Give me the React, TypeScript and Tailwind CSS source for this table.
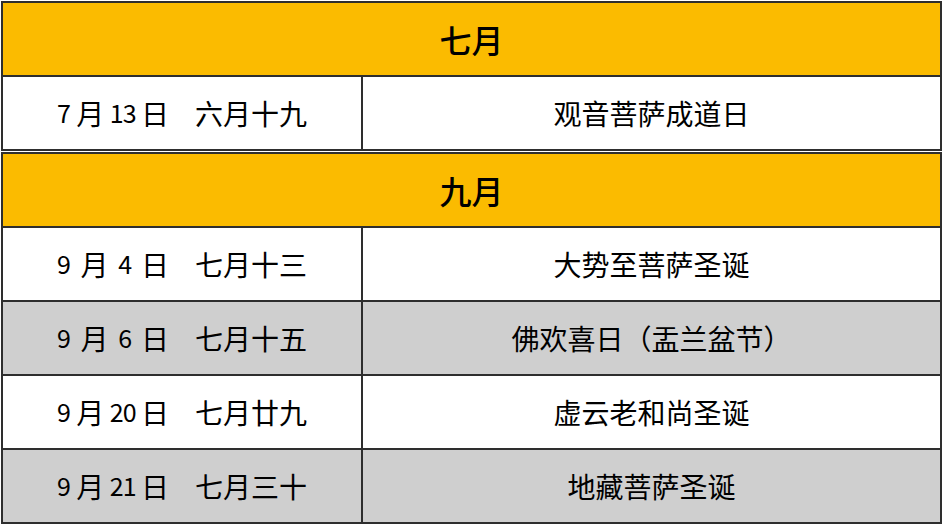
const font = {
  fontFamily: '"Noto Sans CJK SC", "Noto Sans", sans-serif',
};

type Row = { m: string; d: string; lunar: string; name: string; grey?: boolean };

const july: Row[] = [{ m: "7", d: "13", lunar: "六月十九", name: "观音菩萨成道日" }];

const september: Row[] = [
  { m: "9", d: "4", lunar: "七月十三", name: "大势至菩萨圣诞" },
  { m: "9", d: "6", lunar: "七月十五", name: "佛欢喜日（盂兰盆节）", grey: true },
  { m: "9", d: "20", lunar: "七月廿九", name: "虚云老和尚圣诞" },
  { m: "9", d: "21", lunar: "七月三十", name: "地藏菩萨圣诞", grey: true },
];

function MonthTable({ title, rows }: { title: string; rows: Row[] }) {
  return (
    <div className="border-2 border-[#2e2e2e] w-[941px]">
      <div className="h-[72px] bg-[#fbbb00] flex items-center justify-center text-[32px] text-black font-medium">
        {title}
      </div>
      {rows.map((r) => (
        <div
          key={r.m + r.d}
          className={
            "grid grid-cols-[360px_1fr] border-t-2 border-[#2e2e2e] h-[74px] text-[28px] text-black " +
            (r.grey ? "bg-[#cfcfcf]" : "bg-white")
          }
        >
          <div className="flex items-center justify-center gap-[26px] border-r-2 border-[#2e2e2e]">
            <div className="w-[112px] flex items-center justify-between">
              <span className="text-[25px]">{r.m}</span>
              <span>月</span>
              <span className="text-[25px] tracking-[-1px]">{r.d}</span>
              <span>日</span>
            </div>
            <span>{r.lunar}</span>
          </div>
          <div className="flex items-center justify-center">{r.name}</div>
        </div>
      ))}
    </div>
  );
}

export default function App() {
  return (
    <div className="w-[945px] h-[524px] bg-white pl-[1px] pt-[1px] flex flex-col gap-[1px] overflow-hidden" style={font}>
      <MonthTable title="七月" rows={july} />
      <MonthTable title="九月" rows={september} />
    </div>
  );
}
